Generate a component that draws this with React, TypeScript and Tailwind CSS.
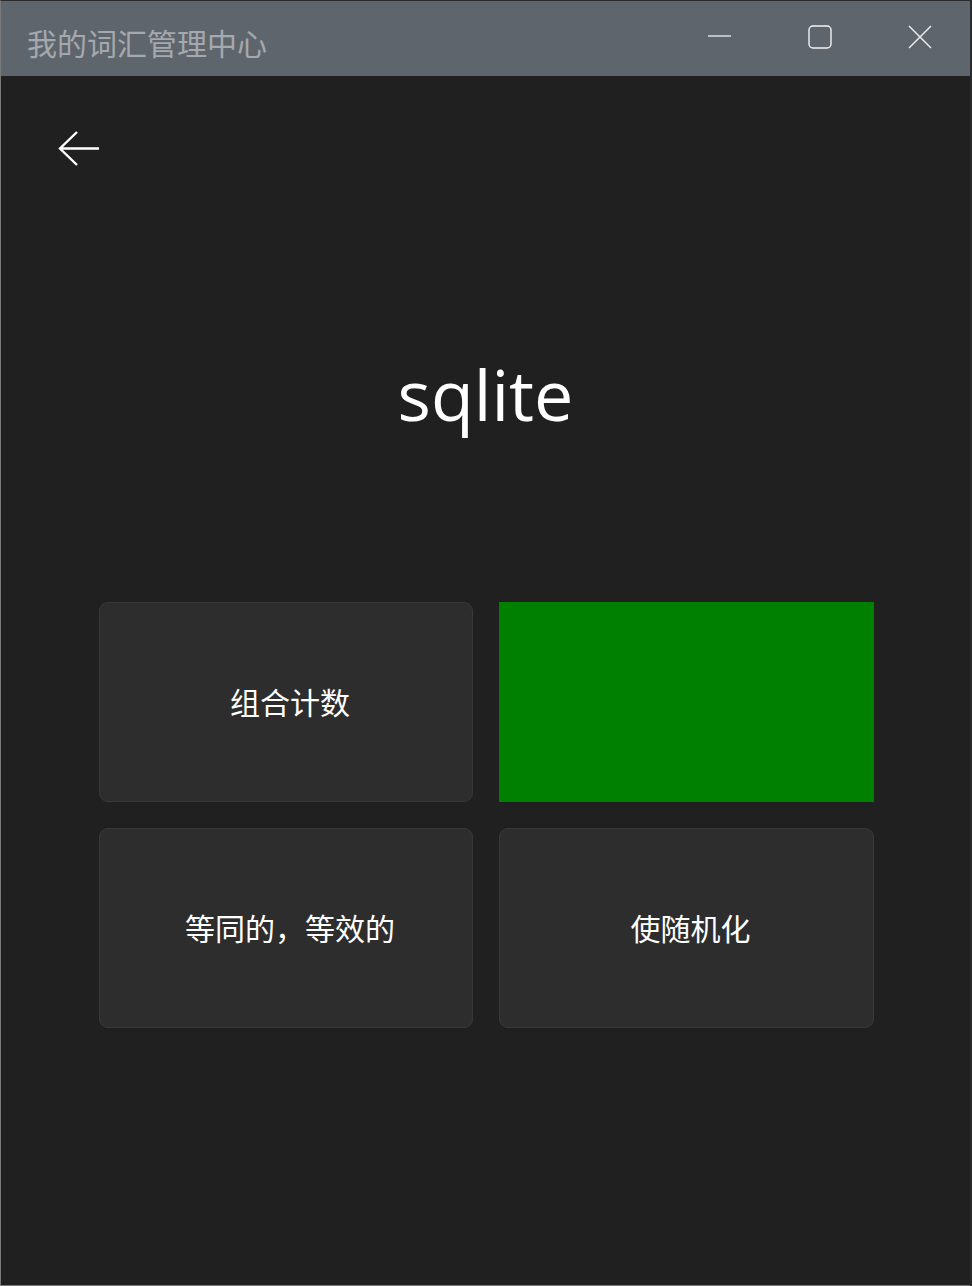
import React from 'react';

const options = [
  { id: 1, text: '组合计数', correct: false },
  { id: 2, text: '', correct: true },
  { id: 3, text: '等同的，等效的', correct: false },
  { id: 4, text: '使随机化', correct: false },
];

const App: React.FC = () => {
  return (
    <div className="w-[972px] h-[1286px] flex bg-[#2a2a2a]" style={{ fontFamily: '"Open Sans", "Noto Sans CJK SC", sans-serif' }}>
      <div className="w-[970px] h-full flex flex-col border-l border-b border-[#7a7a7a] border-t border-t-[#2b2b2b] bg-[#202020]">
        {/* 标题栏 */}
        <div className="h-[75px] bg-[#5f656d] flex items-center shrink-0">
          <div className="pl-[26px] pt-[7px] text-[30px] text-[#a5a9ad] leading-none" style={{ fontFamily: '"Noto Sans CJK SC", sans-serif' }}>
            我的词汇管理中心
          </div>
          <div className="ml-auto flex h-full">
            <button className="w-[100px] h-full flex items-center justify-center">
              <svg width="24" height="24" viewBox="0 0 24 24" className="mt-[-6px]">
                <line x1="0" y1="12" x2="23" y2="12" stroke="#f2f2f2" strokeWidth="1.3" />
              </svg>
            </button>
            <button className="w-[100px] h-full flex items-center justify-center">
              <svg width="24" height="24" viewBox="0 0 24 24" className="mt-[-4px]">
                <rect x="1" y="1" width="22" height="22" rx="4" fill="none" stroke="#f2f2f2" strokeWidth="1.4" />
              </svg>
            </button>
            <button className="w-[100px] h-full flex items-center justify-center">
              <svg width="24" height="24" viewBox="0 0 24 24" className="mt-[-4px]">
                <path d="M1 1 L23 23 M23 1 L1 23" stroke="#f2f2f2" strokeWidth="1.4" />
              </svg>
            </button>
          </div>
        </div>

        {/* 内容 */}
        <div className="flex-1 flex flex-col">
          <div className="pl-[56px] pt-[54px]">
            <svg width="44" height="38" viewBox="0 0 44 38">
              <path d="M42 18.5 H3 M20 2 L3 18.5 L20 35" fill="none" stroke="#ffffff" strokeWidth="2.4" />
            </svg>
          </div>

          <div className="mt-[191px] text-center text-white text-[70px] leading-none">sqlite</div>

          <div className="mt-[173px] grid grid-cols-[374px_375px] gap-x-[26px] gap-y-[26px] pl-[98px]">
            {options.map((o) =>
              o.correct ? (
                <div key={o.id} className="h-[200px] bg-[#008000]" />
              ) : (
                <div
                  key={o.id}
                  className="h-[200px] rounded-[9px] bg-[#2d2d2d] border border-[#383838] flex items-center justify-center pl-[8px] pb-[2px] text-white text-[30px]"
                  style={{ fontFamily: '"Noto Sans CJK SC", sans-serif' }}
                >
                  {o.text}
                </div>
              )
            )}
          </div>
        </div>
      </div>
    </div>
  );
};

export default App;
